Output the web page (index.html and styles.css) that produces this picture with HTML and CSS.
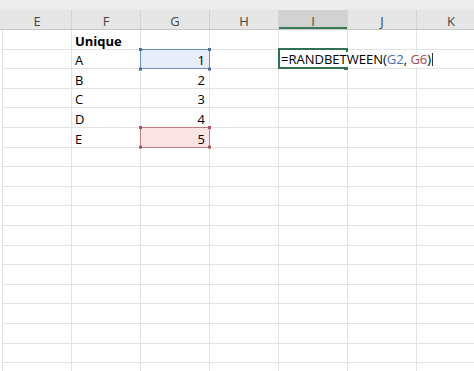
FILE: index.html
```html
<!DOCTYPE html>
<html lang="en">

<head>
    <meta charset="UTF-8">
    <meta name="viewport" content="width=device-width, initial-scale=1.0">
    <title>RANDBETWEEN</title>
    <link rel="stylesheet" href="styles.css">
</head>

<body>

    <div class="sheet">
        <div class="topbar"></div>

        <!-- column letters -->
        <div class="header">
            <div class="col">E</div>
            <div class="col">F</div>
            <div class="col">G</div>
            <div class="col">H</div>
            <div class="col active">I</div>
            <div class="col">J</div>
            <div class="col">K</div>
        </div>

        <div class="grid">
            <div class="row">
                <div class="cell"></div>
                <div class="cell bold">Unique</div>
                <div class="cell"></div>
                <div class="cell"></div>
                <div class="cell"></div>
                <div class="cell"></div>
                <div class="cell"></div>
            </div>
            <div class="row">
                <div class="cell"></div>
                <div class="cell">A</div>
                <div class="cell num range blue">1</div>
                <div class="cell"></div>
                <div class="cell edit">
                    <span class="formula">=RANDBETWEEN(<span class="ref-blue">G2</span>, <span class="ref-red">G6</span>)<span class="caret"></span></span>
                </div>
                <div class="cell"></div>
                <div class="cell"></div>
            </div>
            <div class="row">
                <div class="cell"></div>
                <div class="cell">B</div>
                <div class="cell num">2</div>
                <div class="cell"></div>
                <div class="cell"></div>
                <div class="cell"></div>
                <div class="cell"></div>
            </div>
            <div class="row">
                <div class="cell"></div>
                <div class="cell">C</div>
                <div class="cell num">3</div>
                <div class="cell"></div>
                <div class="cell"></div>
                <div class="cell"></div>
                <div class="cell"></div>
            </div>
            <div class="row">
                <div class="cell"></div>
                <div class="cell">D</div>
                <div class="cell num">4</div>
                <div class="cell"></div>
                <div class="cell"></div>
                <div class="cell"></div>
                <div class="cell"></div>
            </div>
            <div class="row">
                <div class="cell"></div>
                <div class="cell">E</div>
                <div class="cell num range red">5</div>
                <div class="cell"></div>
                <div class="cell"></div>
                <div class="cell"></div>
                <div class="cell"></div>
            </div>
            <!-- empty rows -->
            <div class="row"><div class="cell"></div><div class="cell"></div><div class="cell"></div><div class="cell"></div><div class="cell"></div><div class="cell"></div><div class="cell"></div></div>
            <div class="row"><div class="cell"></div><div class="cell"></div><div class="cell"></div><div class="cell"></div><div class="cell"></div><div class="cell"></div><div class="cell"></div></div>
            <div class="row"><div class="cell"></div><div class="cell"></div><div class="cell"></div><div class="cell"></div><div class="cell"></div><div class="cell"></div><div class="cell"></div></div>
            <div class="row"><div class="cell"></div><div class="cell"></div><div class="cell"></div><div class="cell"></div><div class="cell"></div><div class="cell"></div><div class="cell"></div></div>
            <div class="row"><div class="cell"></div><div class="cell"></div><div class="cell"></div><div class="cell"></div><div class="cell"></div><div class="cell"></div><div class="cell"></div></div>
            <div class="row"><div class="cell"></div><div class="cell"></div><div class="cell"></div><div class="cell"></div><div class="cell"></div><div class="cell"></div><div class="cell"></div></div>
            <div class="row"><div class="cell"></div><div class="cell"></div><div class="cell"></div><div class="cell"></div><div class="cell"></div><div class="cell"></div><div class="cell"></div></div>
            <div class="row"><div class="cell"></div><div class="cell"></div><div class="cell"></div><div class="cell"></div><div class="cell"></div><div class="cell"></div><div class="cell"></div></div>
            <div class="row"><div class="cell"></div><div class="cell"></div><div class="cell"></div><div class="cell"></div><div class="cell"></div><div class="cell"></div><div class="cell"></div></div>
            <div class="row"><div class="cell"></div><div class="cell"></div><div class="cell"></div><div class="cell"></div><div class="cell"></div><div class="cell"></div><div class="cell"></div></div>
            <div class="row"><div class="cell"></div><div class="cell"></div><div class="cell"></div><div class="cell"></div><div class="cell"></div><div class="cell"></div><div class="cell"></div></div>
            <div class="row"><div class="cell"></div><div class="cell"></div><div class="cell"></div><div class="cell"></div><div class="cell"></div><div class="cell"></div><div class="cell"></div></div>
        </div>
    </div>

</body>

</html>
```

FILE: styles.css
```css
body {
    margin: 0;
    background-color: #ffffff;
    font-family: "Open Sans", sans-serif;
    font-size: 13px;
    color: #000000;
    overflow: hidden;
}

.sheet {
    width: 490px;
}

.topbar {
    height: 10px;
    background-color: #ececec;
}

.header {
    display: flex;
    height: 19px;
    padding-left: 3px;
    background-color: #e6e6e6;
    border-bottom: 1px solid #c8c8c8;
}

.col {
    flex: none;
    width: 69px;
    box-sizing: border-box;
    border-right: 1px solid #d3d3d3;
    text-align: center;
    line-height: 22px;
    color: #444444;
}

.col.active {
    background-color: #d2d2d2;
    color: #1f5a3a;
    box-shadow: inset 0 -2px #3b7a58;
}

.grid {
    margin-left: 2px;
    border-left: 1px solid #e2e2e2;
}

.row {
    display: flex;
    height: 19.6px;
}

.cell {
    position: relative;
    flex: none;
    width: 69px;
    box-sizing: border-box;
    display: flex;
    align-items: flex-end;
    padding: 0 3px;
    border-right: 1px solid #e2e2e2;
    border-bottom: 1px solid #e2e2e2;
    line-height: 16px;
    white-space: nowrap;
}

.bold {
    font-weight: bold;
}

.num {
    justify-content: flex-end;
    padding-right: 4px;
}

/* range highlights used by the formula */
.range::after {
    content: "";
    position: absolute;
    left: -1px;
    top: -1px;
    right: -1px;
    bottom: -1px;
    border: 1px solid;
}

.range::before {
    content: "";
    position: absolute;
    left: -2px;
    top: -2px;
    width: 3px;
    height: 3px;
    z-index: 1;
}

.range.blue {
    background-color: #e7eefa;
}

.range.blue::after {
    border-color: #6f8fc0;
}

.range.blue::before {
    background-color: #4d6d9e;
    box-shadow: 69px 0 #4d6d9e, 0 19.6px #4d6d9e, 69px 19.6px #4d6d9e;
}

.range.red {
    background-color: #fbe4e5;
}

.range.red::after {
    border-color: #c07c82;
}

.range.red::before {
    background-color: #a4555c;
    box-shadow: 69px 0 #a4555c, 0 19.6px #a4555c, 69px 19.6px #a4555c;
}

/* cell being edited */
.edit {
    z-index: 2;
    overflow: visible;
    padding-left: 2px;
}

.edit::after {
    content: "";
    position: absolute;
    left: -1px;
    top: -2px;
    right: -1px;
    bottom: -1px;
    border: 2px solid #2f7150;
    pointer-events: none;
}

.edit::before {
    content: "";
    position: absolute;
    right: -1px;
    bottom: -2px;
    width: 4px;
    height: 3px;
    background-color: #2f7150;
    z-index: 2;
}

.formula {
    position: relative;
    z-index: 1;
    margin-bottom: 1px;
    padding-right: 3px;
    background-color: #ffffff;
    line-height: 15px;
}

.ref-blue {
    color: #4a6fb3;
}

.ref-red {
    color: #a8474c;
}

.caret {
    display: inline-block;
    width: 1px;
    height: 13px;
    margin-left: 1px;
    background-color: #333333;
    vertical-align: -2px;
}
```
